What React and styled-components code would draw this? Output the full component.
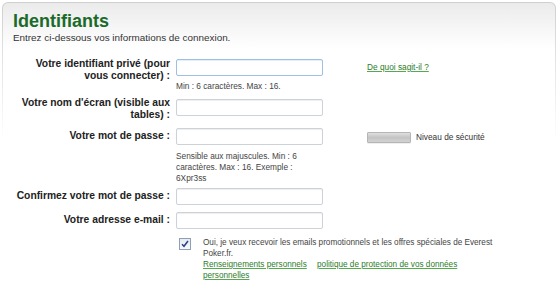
import React from 'react';
import styled, { createGlobalStyle } from 'styled-components';

const GlobalStyle = createGlobalStyle`
  html, body {
    margin: 0;
    padding: 0;
    background: #fff;
  }
  body {
    font-family: "Liberation Sans", Arial, sans-serif;
    color: #333;
  }
`;

const Page = styled.div`
  width: 559px;
  height: 290px;
  padding: 2px 3px 0 2px;
  box-sizing: border-box;
  overflow: hidden;
`;

/* outer layer draws the fading border, inner one the fading grey fill */
const PanelFrame = styled.div`
  padding: 1px 1px 0 1px;
  border-radius: 6px 6px 0 0;
  background: linear-gradient(#cfcfcf, #e4e4e4 60px, #fff 140px);
`;

const Panel = styled.div`
  border-radius: 5px 5px 0 0;
  background: linear-gradient(#ebebeb, #fafafa 34px, #fff 46px);
  padding: 8px 10px 20px 10px;
  min-height: 286px;
  box-sizing: border-box;
`;

const Title = styled.h1`
  margin: 0;
  font-size: 18px;
  line-height: 20px;
  font-weight: bold;
  color: #1b6a2a;
`;

const Intro = styled.p`
  margin: 1px 0 15px 0;
  font-size: 9.9px;
  line-height: 12px;
  color: #333;
`;

const Form = styled.div`
  display: flex;
  flex-direction: column;
`;

const Row = styled.div`
  display: grid;
  grid-template-columns: 157px 147px 1fr;
  column-gap: 6px;
  align-items: start;
  margin-top: ${({ $space }) => $space}px;
`;

const Label = styled.label`
  text-align: right;
  font-size: 10.3px;
  line-height: 12px;
  font-weight: bold;
  color: #222;
  margin-top: ${({ $multi }) => ($multi ? '-1.5px' : '2.5px')};
`;

const Field = styled.div`
  display: flex;
  flex-direction: column;
`;

const Input = styled.input`
  box-sizing: border-box;
  width: 147px;
  height: 17px;
  margin: 0;
  padding: 1px 3px;
  border: 1px solid ${({ $focused }) => ($focused ? '#9fc0e2' : '#cdd2d8')};
  border-radius: 2px;
  background: #fff;
  box-shadow: inset 0 1px 1px ${({ $focused }) => ($focused ? '#e3eefa' : '#eeeeee')};
  outline: none;
`;

const Hint = styled.div`
  margin-top: ${({ $gap }) => $gap}px;
  font-size: 8.3px;
  line-height: 11px;
  color: #444;
`;

const Aside = styled.div`
  display: flex;
  align-items: center;
  gap: 5px;
  padding-left: 38px;
  margin-top: ${({ $offset }) => $offset}px;
  font-size: 8.3px;
  line-height: 11px;
  color: #333;
`;

const Link = styled.a`
  color: #2c7d2c;
  text-decoration: underline;
  text-decoration-color: #56a94c;
  cursor: pointer;
`;

const StrengthBar = styled.div`
  width: 42px;
  height: 9px;
  border: 1px solid #b5b5b5;
  border-radius: 1px;
  background: linear-gradient(#e0e0e0, #c4c4c4 50%, #d2d2d2);
  box-shadow: 0 1px 0 #efefef;
`;

const OptIn = styled.div`
  display: flex;
  align-items: flex-start;
  gap: 12px;
  margin-top: 8px;
  padding-left: 166px;
`;

const Check = styled.span`
  flex: none;
  width: 10px;
  height: 10px;
  margin-top: 1px;
  border: 1px solid #8f9fb4;
  background: linear-gradient(#e6ebf3, #f7f9fc);
  display: flex;
  align-items: center;
  justify-content: center;
`;

const OptText = styled.div`
  width: 292px;
  font-size: 8.2px;
  line-height: 11px;
  color: #444;
`;

const Links = styled.div`
  & > a:first-child {
    margin-right: 8px;
  }
`;

const fields = [
  {
    label: ['Votre identifiant privé (pour', 'vous connecter) :'],
    focused: true,
    hint: 'Min : 6 caractères. Max : 16.',
    hintGap: 4.5,
    aside: 'help',
    space: 0,
  },
  { label: ["Votre nom d'écran (visible aux", 'tables) :'], space: 7.4 },
  {
    label: ['Votre mot de passe :'],
    hint: 'Sensible aux majuscules. Min : 6 caractères. Max : 16. Exemple : 6Xpr3ss',
    hintGap: 6.5,
    aside: 'strength',
    space: 6.5,
  },
  { label: ['Confirmez votre mot de passe :'], space: 3.5 },
  { label: ['Votre adresse e-mail :'], space: 7 },
];

const App = () => {
  return (
    <Page>
      <GlobalStyle />
      <PanelFrame>
        <Panel>
          <Title>Identifiants</Title>
          <Intro>Entrez ci-dessous vos informations de connexion.</Intro>
          <Form>
            {fields.map((f, idx) => (
              <Row key={idx} $space={f.space}>
                <Label $multi={f.label.length > 1}>
                  {f.label.map((line, i) => (
                    <React.Fragment key={i}>
                      {i > 0 && <br />}
                      {line}
                    </React.Fragment>
                  ))}
                </Label>
                <Field>
                  <Input type="text" $focused={f.focused} />
                  {f.hint && <Hint $gap={f.hintGap}>{f.hint}</Hint>}
                </Field>
                {f.aside === 'help' && (
                  <Aside $offset={2.5}>
                    <Link>De quoi sagit-il ?</Link>
                  </Aside>
                )}
                {f.aside === 'strength' && (
                  <Aside $offset={4}>
                    <StrengthBar />
                    <span>Niveau de sécurité</span>
                  </Aside>
                )}
              </Row>
            ))}
            <OptIn>
              <Check>
                <svg width="8" height="8" viewBox="0 0 8 8">
                  <path d="M1 4.2 L3 6.3 L7 1" fill="none" stroke="#2b3f86" strokeWidth="1.5" />
                </svg>
              </Check>
              <OptText>
                Oui, je veux recevoir les emails promotionnels et les offres spéciales de Everest
                Poker.fr.
                <Links>
                  <Link>Renseignements personnels</Link>{' '}
                  <Link>politique de protection de vos données personnelles</Link>
                </Links>
              </OptText>
            </OptIn>
          </Form>
        </Panel>
      </PanelFrame>
    </Page>
  );
};

export default App;
